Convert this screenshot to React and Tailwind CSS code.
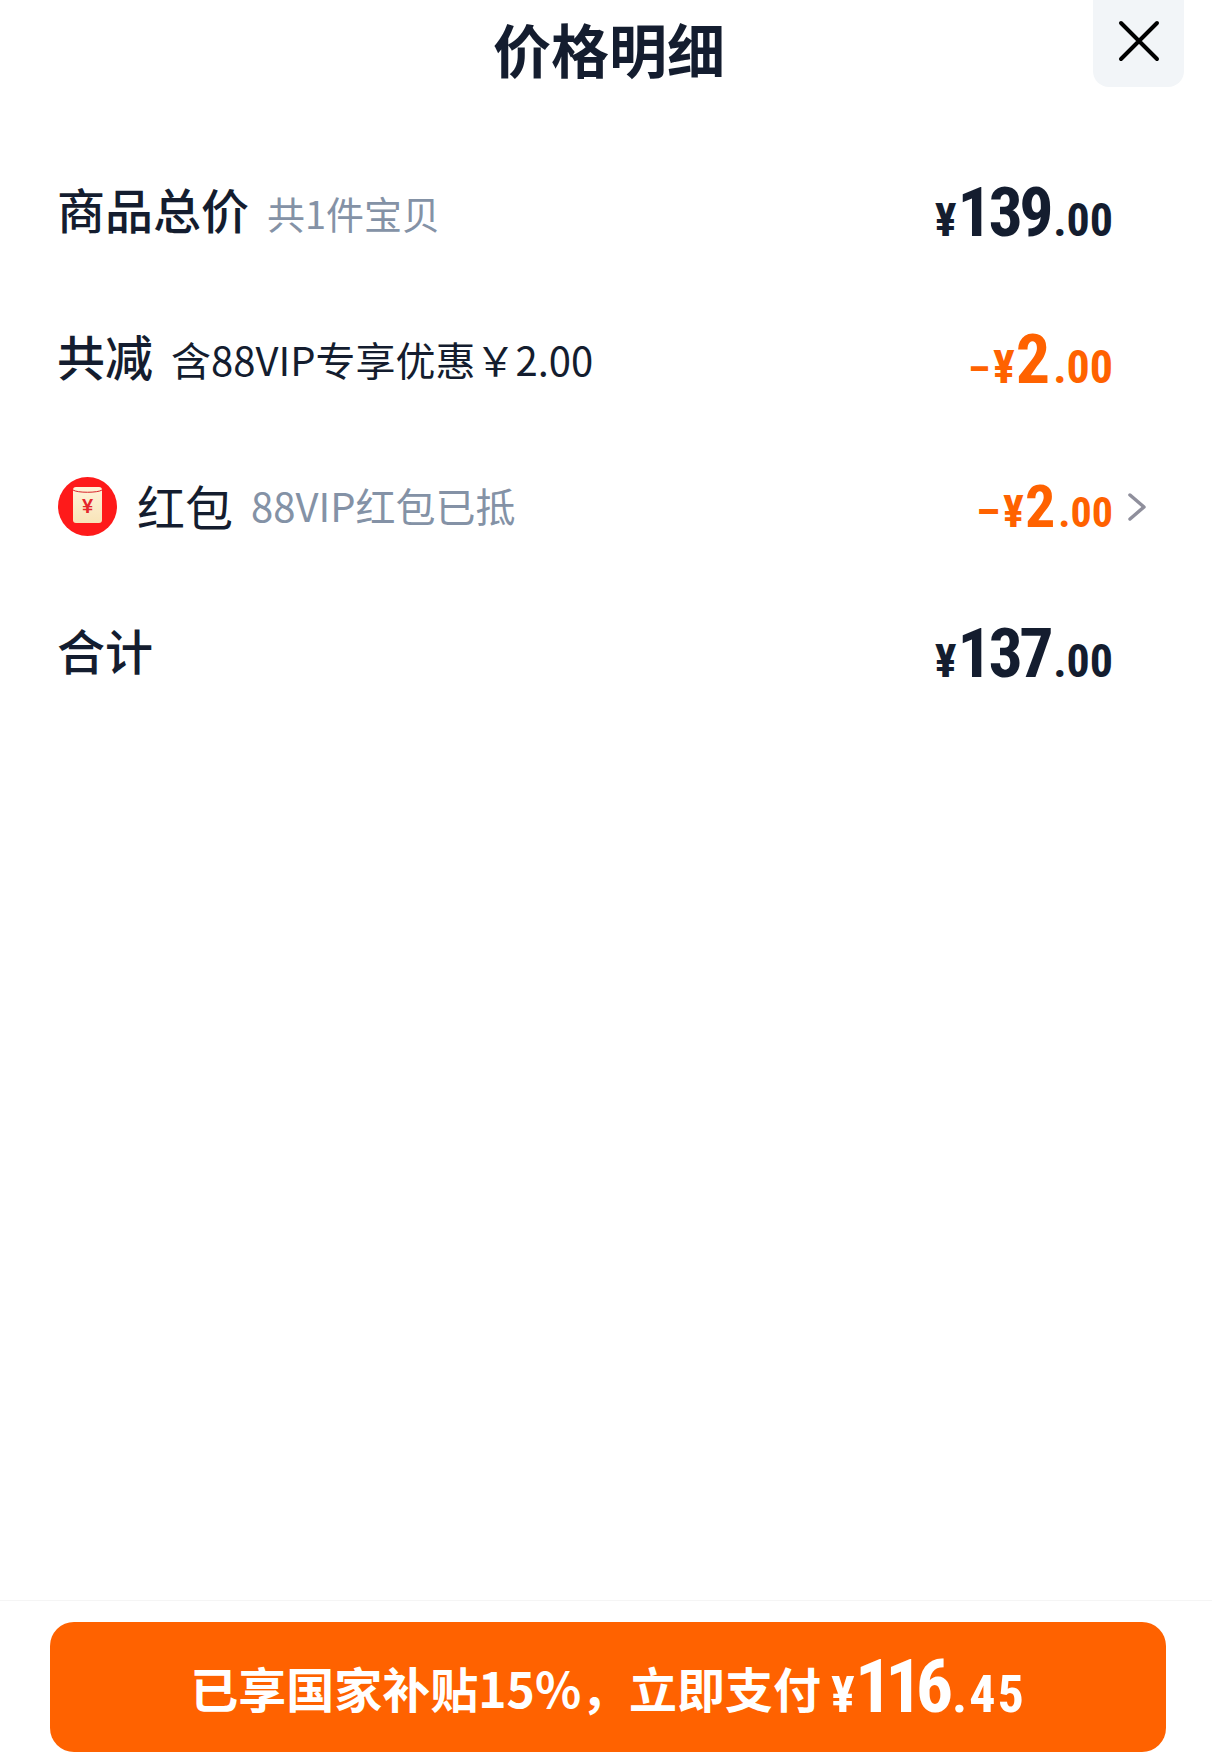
const narrow = "font-['Roboto',sans-serif] font-stretch-[75%]"

function Price({ sign, int, dec, color = 'text-[#141d2f]', signCls, intCls, decCls }) {
  return (
    <div className={`flex items-baseline leading-none font-bold ${narrow} ${color}`}>
      {sign && <span className={`${sign} mr-[3px]`}>–</span>}
      <span className={`${signCls} mr-[1px]`}>¥</span>
      <span className={intCls}>{int}</span>
      <span className={`${decCls} ml-[3px]`}>.{dec}</span>
    </div>
  )
}

function RedPacket() {
  return (
    <svg width="59" height="59" viewBox="0 0 59 59" className="shrink-0">
      <defs>
        <linearGradient id="packet" x1="0" y1="0" x2="0" y2="1">
          <stop offset="0" stopColor="#fff4da" />
          <stop offset="1" stopColor="#f8e4b8" />
        </linearGradient>
      </defs>
      <circle cx="29.5" cy="29.5" r="29.5" fill="#fe1a1a" />
      <rect x="15" y="10" width="29" height="36" rx="3" fill="url(#packet)" />
      <path d="M15 13c4 3 25 3 29 0" fill="none" stroke="#d8232a" strokeWidth="1" />
      <text x="29.5" y="36" textAnchor="middle" fontSize="20" fontWeight="700" fontFamily="Liberation Sans" fill="#e5262c">¥</text>
    </svg>
  )
}

export default function App() {
  return (
    <div className="h-screen bg-white flex flex-col text-[#141d2f] font-['Noto_Sans_CJK_SC',sans-serif]">
      <div className="relative h-[139px] shrink-0">
        <h1 className="pt-[6px] pl-[6px] text-center text-[58px] leading-[84px] font-bold">价格明细</h1>
        <button className="absolute top-0 right-[28px] w-[91px] h-[87px] rounded-b-[16px] bg-[#f2f5f8] flex items-center justify-center pb-[6px]">
          <svg width="42" height="42" viewBox="0 0 42 42" fill="none" stroke="#000" strokeWidth="4" strokeLinecap="round">
            <path d="M3 3l36 36M39 3L3 39" />
          </svg>
        </button>
      </div>

      <div className="h-[147px] flex items-center justify-between pl-[57px] pr-[99px]">
        <div className="flex items-baseline gap-[18px] pb-[9px]">
          <span className="text-[48px] leading-none font-medium">商品总价</span>
          <span className="text-[38px] leading-none text-[#8492a6]">共1件宝贝</span>
        </div>
        <Price int="139" dec="00" signCls="text-[46px]" intCls="text-[68px] tracking-[-3.5px]" decCls="text-[46px]" />
      </div>

      <div className="h-[147px] flex items-center justify-between pl-[57px] pr-[99px]">
        <div className="flex items-baseline gap-[18px] pb-[9px]">
          <span className="text-[48px] leading-none font-medium">共减</span>
          <span className="text-[40px] leading-none">含88VIP专享优惠￥2.00</span>
        </div>
        <Price sign="text-[40px]" int="2" dec="00" color="text-[#ff6200]" signCls="text-[46px]" intCls="text-[68px]" decCls="text-[46px]" />
      </div>

      <div className="h-[147px] flex items-center justify-between pl-[58px] pr-[66px]">
        <div className="flex items-center">
          <RedPacket />
          <span className="ml-[20px] text-[48px] leading-none pb-[3px]">红包</span>
          <span className="ml-[18px] text-[40px] leading-none text-[#8492a6] pb-[3px]">88VIP红包已抵</span>
        </div>
        <div className="flex items-center">
          <Price sign="text-[44px]" int="2" dec="00" color="text-[#ff6200]" signCls="text-[44px]" intCls="text-[60px]" decCls="text-[42px]" />
          <svg width="18" height="28" viewBox="0 0 18 28" fill="none" stroke="#8f8f9c" strokeWidth="3.5" strokeLinecap="round" strokeLinejoin="round" className="ml-[15px]">
            <path d="M2 2l14 12L2 26" />
          </svg>
        </div>
      </div>

      <div className="h-[147px] flex items-center justify-between pl-[57px] pr-[99px]">
        <span className="text-[48px] leading-none font-medium pb-[9px]">合计</span>
        <Price int="137" dec="00" signCls="text-[46px]" intCls="text-[68px] tracking-[-3.5px]" decCls="text-[46px]" />
      </div>

      <div className="flex-1" />

      <div className="border-t border-[#f5f5f5] pt-[21px] pb-[3px] px-[50px] shrink-0">
        <button className="w-[1116px] h-[130px] rounded-[24px] bg-[#ff6200] text-white flex items-center justify-center">
          <span className="text-[48px] leading-none font-bold">已享国家补贴15%，立即支付</span>
          <span className={`flex items-baseline leading-none font-bold ml-[10px] ${narrow}`}>
            <span className="text-[50px]">¥</span>
            <span className="text-[74px] tracking-[-7px]">116</span>
            <span className="text-[52px] ml-[6px] tracking-[2px]">.45</span>
          </span>
        </button>
      </div>
    </div>
  )
}
